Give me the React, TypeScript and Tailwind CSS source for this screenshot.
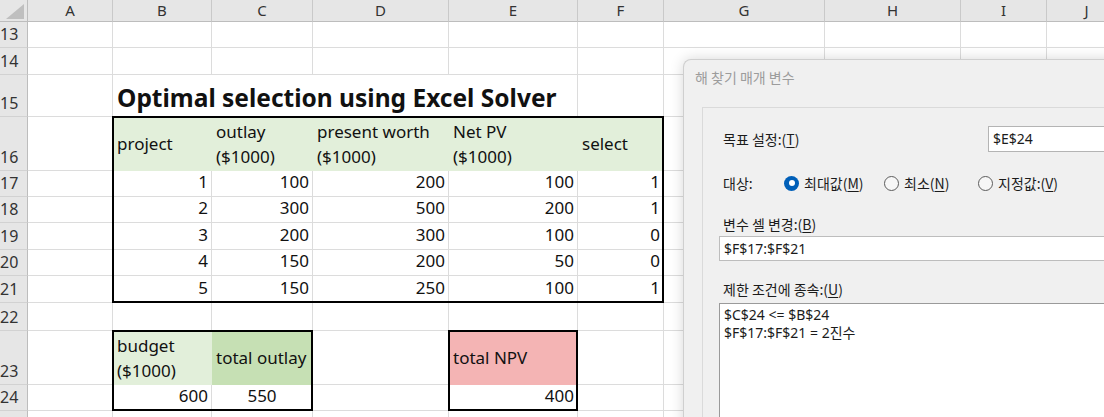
import type { ReactNode } from 'react'

const COLS = [85, 99, 101, 136, 129, 86, 161, 136, 86, 80]
const LETTERS = ['A', 'B', 'C', 'D', 'E', 'F', 'G', 'H', 'I', 'J']

const FONT = { fontFamily: '"Noto Sans", "Noto Sans CJK KR", sans-serif' }
const KFONT = { fontFamily: '"Noto Sans CJK KR", "Noto Sans", sans-serif' }

type Cell = {
  t?: ReactNode
  a?: 'l' | 'r' | 'c'
  v?: 'c' | 'b'
  bg?: string
  span?: number
  edge?: string
  cls?: string
}

type Row = { n: number; h: number; cells: Cell[]; hideNum?: boolean }

const GREEN = 'bg-[#e2efda]'

const dataRows: [number, number, string, string, string, string, string][] = [
  [17, 26, '1', '100', '200', '100', '1'],
  [18, 26, '2', '300', '500', '200', '1'],
  [19, 27, '3', '200', '300', '100', '0'],
  [20, 26, '4', '150', '200', '50', '0'],
  [21, 27, '5', '150', '250', '100', '1'],
]

const empty = (k: number): Cell[] => Array.from({ length: k }, () => ({}))

const rows: Row[] = [
  { n: 13, h: 26, cells: empty(10) },
  { n: 14, h: 27, cells: empty(10) },
  {
    n: 15,
    h: 42,
    cells: [
      {},
      {
        t: 'Optimal selection using Excel Solver',
        span: 4,
        cls: 'font-bold text-[24.5px] pb-[4px]',
      },
      ...empty(5),
    ],
  },
  {
    n: 16,
    h: 54,
    cells: [
      {},
      { t: 'project', bg: GREEN, v: 'c', edge: 'tl' },
      { t: 'outlay\n($1000)', bg: GREEN, v: 'c', edge: 't' },
      { t: 'present worth\n($1000)', bg: GREEN, v: 'c', edge: 't' },
      { t: 'Net PV\n($1000)', bg: GREEN, v: 'c', edge: 't' },
      { t: 'select', bg: GREEN, v: 'c', edge: 'tr' },
      ...empty(4),
    ],
  },
  ...dataRows.map(([n, h, a, b, c, d, e]) => {
    const last = n === 21 ? 'b' : ''
    return {
      n,
      h,
      cells: [
        {},
        { t: a, a: 'r', edge: 'l' + last },
        { t: b, a: 'r', edge: last },
        { t: c, a: 'r', edge: last },
        { t: d, a: 'r', edge: last },
        { t: e, a: 'r', edge: 'r' + last },
        ...empty(4),
      ] as Cell[],
    }
  }),
  { n: 22, h: 28, cells: empty(10) },
  {
    n: 23,
    h: 54,
    cells: [
      {},
      { t: 'budget\n($1000)', bg: GREEN, v: 'c', edge: 'tl' },
      { t: 'total outlay', bg: 'bg-[#c6e0b4]', v: 'c', edge: 'tr' },
      {},
      { t: 'total NPV', bg: 'bg-[#f4b4b4]', v: 'c', edge: 'tlr' },
      ...empty(5),
    ],
  },
  {
    n: 24,
    h: 26,
    cells: [
      {},
      { t: '600', a: 'r', edge: 'lb' },
      { t: '550', a: 'c', edge: 'rb' },
      {},
      { t: '400', a: 'r', edge: 'lrb' },
      ...empty(5),
    ],
  },
  { n: 25, h: 12, cells: empty(10), hideNum: true },
]

function SheetCell({ cell, width }: { cell: Cell; width: number }) {
  const edge = cell.edge ?? ''
  const align =
    cell.a === 'r' ? 'justify-end pr-[3px] text-right' : cell.a === 'c' ? 'justify-center text-center' : 'justify-start pl-[4px]'
  const valign = cell.v === 'c' ? 'items-center' : 'items-end pb-[2px]'
  return (
    <div
      className={`relative flex shrink-0 border-r border-b ${
        cell.bg ? `${cell.bg} border-transparent` : 'border-[#dcdcdc]'
      } ${align} ${valign}`}
      style={{ width }}
    >
      <span className={`whitespace-pre-line leading-[25px] text-[17px] text-[#111] ${cell.cls ?? ''}`}>{cell.t}</span>
      {edge.includes('t') && <span className="absolute -top-px -left-px -right-px z-10 h-[2px] bg-black" />}
      {edge.includes('b') && <span className="absolute -bottom-px -left-px -right-px z-10 h-[2px] bg-black" />}
      {edge.includes('l') && <span className="absolute -left-px -top-px -bottom-px z-10 w-[2px] bg-black" />}
      {edge.includes('r') && <span className="absolute -right-px -top-px -bottom-px z-10 w-[2px] bg-black" />}
    </div>
  )
}

function Sheet() {
  return (
    <div className="flex flex-col" style={FONT}>
      <div className="flex h-[22px]">
        <div className="relative w-[28px] shrink-0 border-r border-b border-[#bdbdbd] bg-[#e6e6e6]">
          <svg width="28" height="22" className="absolute inset-0">
            <polygon points="6,19 24,19 24,4" fill="#bfbfbf" />
          </svg>
        </div>
        {COLS.map((w, i) => (
          <div
            key={i}
            className="flex shrink-0 items-center justify-center border-r border-b border-r-[#c9c9c9] border-b-[#bdbdbd] bg-[#e6e6e6] text-[15px] text-[#333]"
            style={{ width: w }}
          >
            {LETTERS[i]}
          </div>
        ))}
      </div>
      {rows.map((r) => {
        let ci = 0
        return (
          <div key={r.n} className="flex" style={{ height: r.h }}>
            <div className="flex w-[28px] shrink-0 items-end overflow-hidden border-r border-b border-r-[#bdbdbd] border-b-[#d2d2d2] bg-[#e6e6e6] pb-[2px] text-[16px] leading-[22px] text-[#333]">
              {r.hideNum ? null : r.n}
            </div>
            {r.cells.map((c, k) => {
              const span = c.span ?? 1
              const w = COLS.slice(ci, ci + span).reduce((s, x) => s + x, 0)
              ci += span
              return <SheetCell key={k} cell={c} width={w} />
            })}
          </div>
        )
      })}
    </div>
  )
}

function Key({ children, k }: { children: string; k: string }) {
  return (
    <span>
      {children}(<span className="underline underline-offset-2">{k}</span>)
    </span>
  )
}

function Radio({ on, children }: { on?: boolean; children: ReactNode }) {
  return (
    <div className="flex items-center gap-[5px]">
      {on ? (
        <span className="flex h-[15px] w-[15px] items-center justify-center rounded-full bg-[#005fb8]">
          <span className="h-[6px] w-[6px] rounded-full bg-white" />
        </span>
      ) : (
        <span className="h-[15px] w-[15px] rounded-full border border-[#5c5c5c] bg-[#f7f7f7]" />
      )}
      {children}
    </div>
  )
}

function SolverDialog() {
  return (
    <div
      className="absolute left-[683px] top-[59px] h-[420px] w-[560px] rounded-tl-[8px] border-l border-t border-[#cfcfcf] bg-[#f0f0f0] shadow-[0_0_14px_rgba(0,0,0,0.16)]"
      style={KFONT}
    >
      <div className="h-[47px] pl-[11px] pt-[7px] text-[14px] leading-[20px] text-[#9c9c9c]">해 찾기 매개 변수</div>
      <div className="ml-[18px] h-full border-l border-t border-[#dadada] pl-[16px] pt-[18px] text-[14px] leading-[20px] text-[#1b1b1b]">
        <div className="flex items-center">
          <div className="w-[269px] pl-[4px]">
            <Key k="T">목표 설정:</Key>
          </div>
          <div className="flex h-[26px] w-[200px] items-center border border-[#b4b4b4] bg-white pl-[4px]" style={FONT}>
            $E$24
          </div>
        </div>
        <div className="mt-[21px] flex items-center pl-[4px]">
          <div className="w-[61px]">대상:</div>
          <div className="w-[100px]">
            <Radio on>
              <Key k="M">최대값</Key>
            </Radio>
          </div>
          <div className="w-[94px]">
            <Radio>
              <Key k="N">최소</Key>
            </Radio>
          </div>
          <Radio>
            <Key k="V">지정값:</Key>
          </Radio>
        </div>
        <div className="mt-[21px] pl-[4px]">
          <Key k="B">변수 셀 변경:</Key>
        </div>
        <div
          className="mt-[2px] flex h-[25px] w-[480px] items-center border border-[#bdbdbd] bg-white pl-[4px]"
          style={FONT}
        >
          $F$17:$F$21
        </div>
        <div className="mt-[18px] pl-[4px]">
          <Key k="U">제한 조건에 종속:</Key>
        </div>
        <div
          className="mt-[4px] h-[200px] w-[480px] border border-[#9a9a9a] bg-white pl-[4px] pt-[2px] leading-[18px]"
          style={FONT}
        >
          <div>$C$24 &lt;= $B$24</div>
          <div>$F$17:$F$21 = 2진수</div>
        </div>
      </div>
    </div>
  )
}

export default function App() {
  return (
    <div className="relative h-[417px] w-[1104px] overflow-hidden bg-white">
      <Sheet />
      <SolverDialog />
    </div>
  )
}
